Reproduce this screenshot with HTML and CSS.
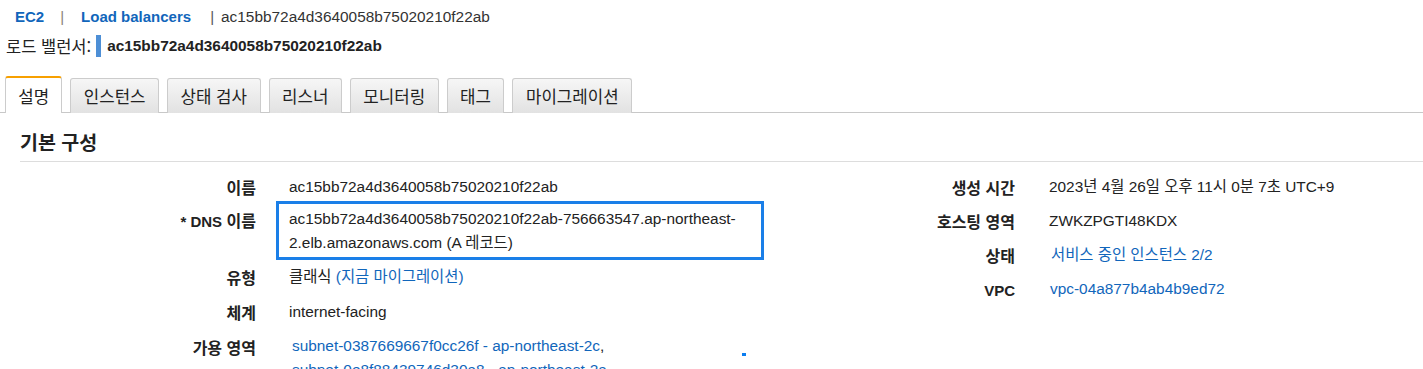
FILE: index.html
```html
<!DOCTYPE html>
<html lang="ko">
<head>
<meta charset="utf-8">
<title>Load balancer</title>
<link rel="stylesheet" href="styles.css">
</head>
<body>
<div class="page">
  <div class="crumbs">
    <a class="crumb" href="#">EC2</a>
    <span class="sep sep1">|</span>
    <a class="crumb" href="#">Load balancers</a>
    <span class="sep sep2">|</span>
    <span class="crumb-cur">ac15bb72a4d3640058b75020210f22ab</span>
  </div>
  <div class="lb-title">
    <span class="lb-label">로드 밸런서:</span>
    <span class="caret"></span>
    <span class="lb-name">ac15bb72a4d3640058b75020210f22ab</span>
  </div>

  <div class="tabs">
    <div class="tab active">설명</div>
    <div class="tab">인스턴스</div>
    <div class="tab">상태 검사</div>
    <div class="tab">리스너</div>
    <div class="tab">모니터링</div>
    <div class="tab">태그</div>
    <div class="tab">마이그레이션</div>
  </div>

  <div class="section">
    <h2 class="section-title">기본 구성</h2>
    <div class="details">
      <div class="col left">
        <div class="row">
          <div class="label">이름</div>
          <div class="value">ac15bb72a4d3640058b75020210f22ab</div>
        </div>
        <div class="row row-dns">
          <div class="label"><span class="lat">* DNS</span> 이름</div>
          <div class="value dns-box">ac15bb72a4d3640058b75020210f22ab-756663547.ap-northeast-<br>2.elb.amazonaws.com (A 레코드)</div>
        </div>
        <div class="row">
          <div class="label">유형</div>
          <div class="value">클래식 <a class="link" href="#">(지금 마이그레이션)</a></div>
        </div>
        <div class="row">
          <div class="label">체계</div>
          <div class="value">internet-facing</div>
        </div>
        <div class="row">
          <div class="label">가용 영역</div>
          <div class="value subnets">
            <a class="link" href="#">subnet-0387669667f0cc26f - ap-northeast-2c</a>,<br>
            <a class="link" href="#">subnet-0e8f88439746d30a8 - ap-northeast-2a</a>
          </div>
        </div>
        <span class="handle"></span>
      </div>
      <div class="col right">
        <div class="row">
          <div class="label">생성 시간</div>
          <div class="value">2023년 4월 26일 오후 11시 0분 7초 UTC+9</div>
        </div>
        <div class="row">
          <div class="label">호스팅 영역</div>
          <div class="value">ZWKZPGTI48KDX</div>
        </div>
        <div class="row">
          <div class="label">상태</div>
          <div class="value"><a class="link shift" href="#">서비스 중인 인스턴스 2/2</a></div>
        </div>
        <div class="row">
          <div class="label"><span class="lat">VPC</span></div>
          <div class="value"><a class="link shift1" href="#">vpc-04a877b4ab4b9ed72</a></div>
        </div>
      </div>
    </div>
  </div>
</div>
</body>
</html>
```

FILE: styles.css
```css
html, body {
  margin: 0;
  padding: 0;
  background: #ffffff;
}
body {
  font-family: "Liberation Sans", Arial, "Noto Sans CJK KR", sans-serif;
  color: #222222;
  font-size: 15.4px;
  overflow: hidden;
}
a { text-decoration: none; }

.page {
  position: relative;
  height: 369px;
  overflow: hidden;
}

/* breadcrumbs */
.crumbs {
  display: flex;
  align-items: center;
  height: 22px;
  padding: 6px 0 0 15px;
  font-size: 15px;
  line-height: 22px;
}
.crumb {
  color: #1166bb;
  font-weight: bold;
}
.sep { color: #8a7f78; }
.sep1 { margin: 0 17px 0 16px; }
.sep2 { margin: 0 7px 0 19px; color: #555; }
.crumb-cur { color: #333; font-size: 15.4px; }

.lb-title {
  display: flex;
  align-items: center;
  height: 24px;
  margin-top: 6px;
  padding-left: 6px;
  line-height: 24px;
}
.lb-label {
  font-family: "Noto Sans CJK KR", "Liberation Sans", sans-serif;
  font-size: 16.5px;
  color: #222;
}
.caret {
  display: inline-block;
  width: 5px;
  height: 22px;
  background: #4d8fd6;
  margin: 0 6px 0 5px;
}
.lb-name {
  font-weight: bold;
  color: #222;
}

/* tabs */
.tabs {
  display: flex;
  align-items: flex-end;
  gap: 8px;
  margin-top: 18px;
  padding-left: 5px;
  border-bottom: 1px solid #c8c8c8;
  height: 36px;
}
.tab {
  box-sizing: border-box;
  height: 35px;
  padding: 0 12.5px;
  margin-bottom: -1px;
  font-family: "Noto Sans CJK KR", sans-serif;
  font-size: 16.8px;
  line-height: 34px;
  color: #222;
  border: 1px solid #cccccc;
  border-bottom: none;
  border-radius: 3px 3px 0 0;
  background: linear-gradient(#f6f6f6, #e2e2e2);
}
.tab.active {
  height: 37px;
  padding: 0 12.2px;
  border-top: 2px solid #f7a000;
  background: #ffffff;
  line-height: 36px;
}

/* section */
.section {
  padding-left: 20px;
}
.section-title {
  margin: 0;
  padding-top: 16px;
  height: 32px;
  line-height: 25px;
  font-family: "Noto Sans CJK KR", sans-serif;
  font-size: 19.5px;
  font-weight: bold;
  color: #222;
  border-bottom: 1px solid #dddddd;
}

.details {
  display: grid;
  grid-template-columns: 825px 1fr;
  padding-top: 8px;
}
.col { position: relative; }

.row {
  display: flex;
  line-height: 24px;
  padding: 5px 0 6px;
}
.right .row { padding: 5px 0 5px; }

.label {
  flex: none;
  text-align: right;
  font-family: "Noto Sans CJK KR", sans-serif;
  font-weight: bold;
  font-size: 16px;
  color: #222;
}
.label .lat {
  font-family: "Liberation Sans", Arial, sans-serif;
  font-size: 15px;
}
.left .label { width: 236px; margin-right: 33px; }
.right .label { width: 170px; margin-right: 34px; }

.value {
  color: #222;
}
.link { color: #1166bb; }
.subnets { line-height: 24px; margin-top: -1px; }
.subnets .link { display: inline-block; margin-left: 3px; }
.shift { margin-left: 2px; }
.shift1 { margin-left: 1px; }

.row-dns {
  padding: 0;
  height: 55px;
}
.row-dns .label { padding-top: 3px; }
.dns-box {
  box-sizing: border-box;
  width: 488px;
  height: 59px;
  margin: -4px 0 0 -13px;
  padding: 3px 10px 2px;
  border: 3px solid #1a7fe8;
}

.handle {
  position: absolute;
  left: 722px;
  top: 183px;
  width: 4px;
  height: 3px;
  background: #0a7df0;
}
```
